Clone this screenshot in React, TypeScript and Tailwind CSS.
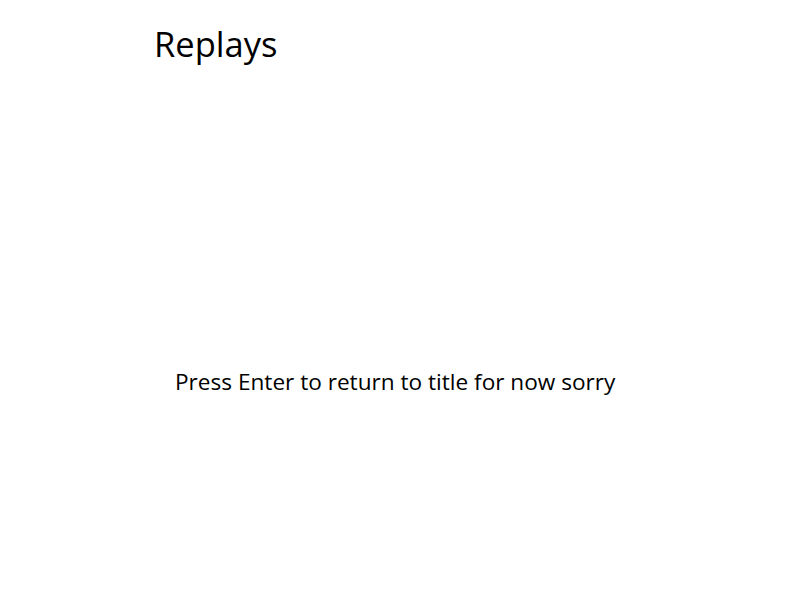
export default function App() {
  return (
    <div
      className="flex h-[600px] w-[800px] flex-col bg-white text-black"
      style={{ fontFamily: '"Open Sans", "Noto Sans", sans-serif' }}
    >
      <h1 className="pl-[154px] pt-[21px] text-[34.5px] leading-[46px]">Replays</h1>
      <p className="mt-[300px] pl-[175px] text-[22.6px] leading-[30px]">
        Press Enter to return to title for now sorry
      </p>
    </div>
  );
}
